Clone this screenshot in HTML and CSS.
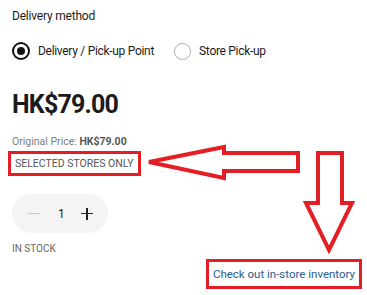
FILE: index.html
```html
<!DOCTYPE html>
<html lang="en">
<head>
  <meta charset="UTF-8">
  <title>Product</title>
  <link rel="stylesheet" href="styles.css">
</head>
<body>
  <div class="product">
    <div class="section-title">Delivery method</div>
    <div class="radios">
      <label class="radio">
        <span class="dot checked"></span>
        <span>Delivery / Pick-up Point</span>
      </label>
      <label class="radio">
        <span class="dot"></span>
        <span>Store Pick-up</span>
      </label>
    </div>
    <div class="price">HK$79.00</div>
    <div class="orig">Original Price: <b>HK$79.00</b></div>
    <div class="tag">SELECTED STORES ONLY</div>
    <div class="qty">
      <span class="minus"></span>
      <span class="num">1</span>
      <span class="plus"></span>
    </div>
    <div class="stock">IN STOCK</div>
    <div class="link-row">
      <a class="inventory" href="#">Check out in-store inventory</a>
    </div>
  </div>

  <svg class="arrows" width="367" height="295" viewBox="0 0 367 295">
    <polygon points="149,162 224,147 224,153 298,153 298,171 224,171 224,178" />
    <polygon points="318,153 342,153 342,203 352,203 329,250 306,203 318,203" />
  </svg>
</body>
</html>
```
FILE: styles.css
```css
body {
  margin: 0;
  font-family: Roboto, "Liberation Sans", sans-serif;
  color: #1b1b1b;
  background: #fff;
}
.product {
  padding: 9px 12px 0 12px;
}
.section-title {
  font-size: 12px;
  line-height: 14px;
  letter-spacing: -0.2px;
}
.radios {
  display: flex;
  gap: 20px;
  margin-top: 19px;
}
.radio {
  display: flex;
  align-items: center;
  gap: 8px;
  font-size: 12px;
  letter-spacing: -0.3px;
}
.dot {
  width: 15px;
  height: 15px;
  border: 1.5px solid #aaa;
  border-radius: 50%;
  position: relative;
}
.dot.checked {
  border: 2px solid #111;
  width: 14px;
  height: 14px;
}
.dot.checked::after {
  content: "";
  position: absolute;
  left: 3px;
  top: 3px;
  width: 8px;
  height: 8px;
  border-radius: 50%;
  background: #111;
}
.price {
  margin-top: 31px;
  font-size: 25px;
  font-weight: bold;
  letter-spacing: -0.8px;
  line-height: 28px;
}
.orig {
  margin-top: 16px;
  font-size: 10.5px;
  color: #7d7d7d;
}
.orig b {
  color: #555;
}
.tag {
  display: inline-block;
  margin: 3px 0 0 -4px;
  padding: 3px 4px;
  border: 3px solid #e31e24;
  font-size: 10.5px;
  color: #555;
}
.qty {
  display: flex;
  align-items: center;
  width: 96px;
  height: 39px;
  margin-top: 18px;
  background: #f4f4f4;
  border-radius: 20px;
}
.minus {
  width: 12px;
  height: 1.5px;
  background: #c4c4c4;
  margin-left: 16px;
}
.num {
  font-size: 12px;
  margin-left: 18px;
}
.plus {
  position: relative;
  width: 12px;
  height: 12px;
  margin-left: 16px;
}
.plus::before,
.plus::after {
  content: "";
  position: absolute;
  background: #222;
}
.plus::before {
  left: 0;
  top: 5px;
  width: 12px;
  height: 1.5px;
}
.plus::after {
  left: 5.25px;
  top: 0;
  width: 1.5px;
  height: 12px;
}
.stock {
  margin-top: 10px;
  font-size: 10px;
  color: #666;
}
.link-row {
  display: flex;
  justify-content: flex-end;
  margin: 5px -7px 0 0;
}
.inventory {
  display: block;
  padding: 5px 4px;
  border: 3px solid #e31e24;
  font-size: 11.5px;
  color: #2a5d8f;
  text-decoration: none;
}
.arrows {
  position: absolute;
  left: 0;
  top: 0;
  pointer-events: none;
}
.arrows polygon {
  fill: none;
  stroke: #e31e24;
  stroke-width: 4;
  stroke-linejoin: miter;
}
```
